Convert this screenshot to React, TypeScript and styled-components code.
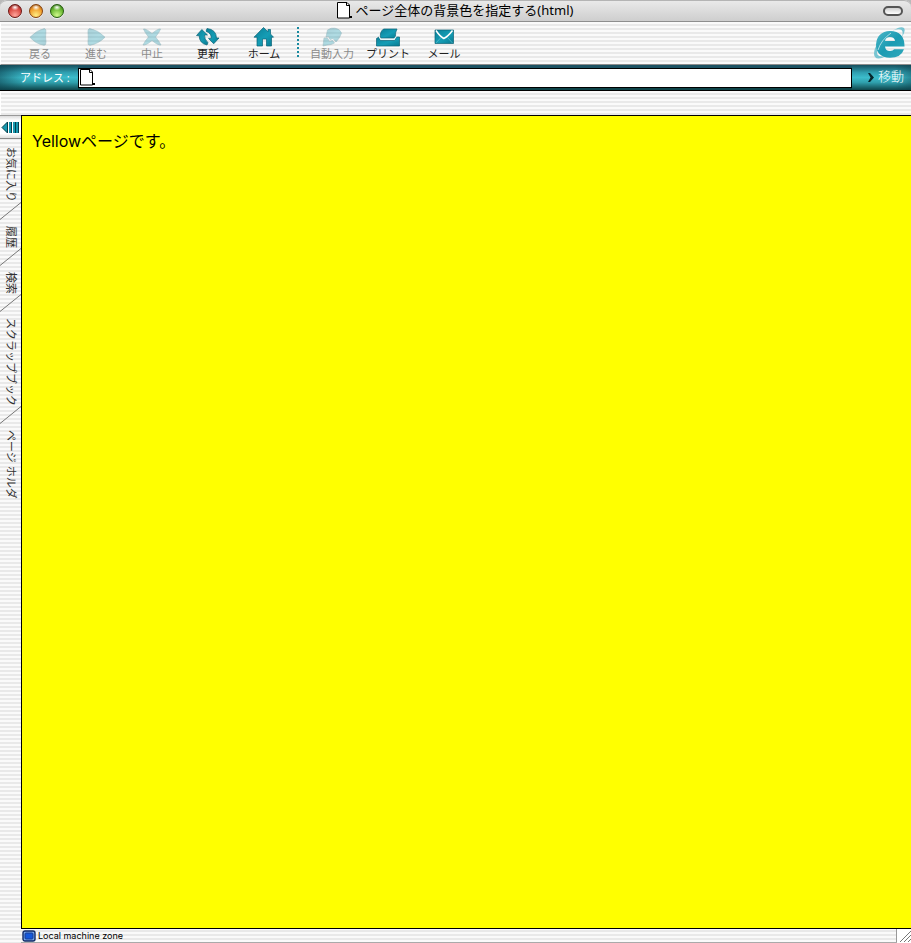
import React from "react";
import styled, { createGlobalStyle } from "styled-components";

const GlobalStyle = createGlobalStyle`
  * { box-sizing: border-box; }
  html, body { margin: 0; padding: 0; }
  body { font-family: "Noto Sans", "Noto Sans CJK JP", sans-serif; color: #000; }
  button { font: inherit; color: inherit; background: none; border: 0; padding: 0; margin: 0; }
`;

const stripes = `repeating-linear-gradient(to bottom, #fafafa 0, #fafafa 2px, #e9e9e9 2px, #e9e9e9 4px)`;

const Window = styled.div`
  display: flex;
  flex-direction: column;
  min-height: 100vh;
  background: ${stripes};
`;

const TitleBar = styled.header`
  display: grid;
  grid-template-columns: 1fr auto 1fr;
  align-items: center;
  height: 22px;
  padding: 0 8px;
  border-top: 1px solid #b4b4b4;
  border-bottom: 1px solid #8e8e8e;
  border-radius: 7px 7px 0 0;
  background: linear-gradient(#e9e9e9, #cecece);
  box-shadow: 0 -7px 0 7px #b9b9b9;
  clip-path: inset(0);
`;

const Lights = styled.div`
  display: flex;
  gap: 7px;
`;

const Light = styled.button<{ $dark: string; $base: string; $glow: string }>`
  width: 14px;
  height: 14px;
  border-radius: 50%;
  border: 1px solid ${(p) => p.$dark};
  background:
    radial-gradient(ellipse 4px 3px at 50% 20%, #ffffff, #ffffff00),
    radial-gradient(circle at 50% 85%, ${(p) => p.$glow}, ${(p) => p.$base} 60%, ${(p) => p.$dark});
  box-shadow: 0 1px 0 #ffffff99;
`;

const Title = styled.h1`
  display: flex;
  align-items: center;
  gap: 3px;
  margin: 0;
  padding: 0 2px 2px 0;
  font-size: 13px;
  line-height: 18px;
  font-weight: 400;
  white-space: nowrap;
`;

const Pill = styled.button`
  justify-self: end;
  width: 20px;
  height: 10px;
  border: 2px solid #555;
  border-radius: 5px;
  background: linear-gradient(#cfcfcf, #fff);
`;

const Toolbar = styled.nav`
  display: flex;
  align-items: flex-start;
  height: 43px;
  padding: 4px 5px 0 11px;
  border-left: 1px solid #fff;
  border-bottom: 1px solid #8c8c8c;
  background: ${stripes};
`;

const Tool = styled.button`
  display: flex;
  flex-direction: column;
  align-items: center;
  width: 56px;
  font-size: 11px;
  line-height: 13px;
  white-space: nowrap;
  color: #222;
  &:disabled { color: #8b8b8b; }
  &:disabled svg { opacity: 0.32; }
`;

const Divider = styled.div`
  width: 2px;
  height: 32px;
  margin: 1px 5px 0 5px;
  background: repeating-linear-gradient(to bottom, #1a8aa0 0, #1a8aa0 2px, transparent 2px, transparent 4px);
`;

const Brand = styled.div`
  margin-left: auto;
  height: 34px;
`;

const AddressBar = styled.form`
  display: flex;
  align-items: center;
  height: 26px;
  border-bottom: 1px solid #000;
  color: #fff;
  background:
    linear-gradient(to right, #0b3d4a88, transparent 24px, transparent calc(100% - 16px), #0b3d4a66),
    linear-gradient(#16505e, #2f9fb0 30%, #3cbccb 50%, #2f9fac 70%, #0e454a);
`;

const AddressLabel = styled.label`
  width: 78px;
  padding-left: 20px;
  font-size: 11px;
  line-height: 16px;
  white-space: nowrap;
`;

const AddressField = styled.div`
  display: flex;
  align-items: center;
  flex: 1;
  min-width: 0;
  height: 20px;
  border: 1px solid #000;
  background: #fff;
  box-shadow: 0 -3px 0 #1c5263, 0 2px 0 #0e4448;
`;

const AddressInput = styled.input`
  flex: 1;
  min-width: 0;
  height: 18px;
  border: 0;
  outline: 0;
  padding: 0 4px;
  background: transparent;
  font: inherit;
  font-size: 12px;
`;

const Go = styled.button`
  display: flex;
  align-items: center;
  gap: 4px;
  width: 59px;
  padding: 0 0 4px 16px;
  font-size: 13px;
  line-height: 18px;
  font-weight: 300;
  color: #fff;
  white-space: nowrap;
`;

const GoArrow = styled.svg`
  margin-top: 4px;
`;

const FavoritesBar = styled.div`
  height: 24px;
  border-left: 1px solid #fff;
  background: ${stripes};
`;

const Body = styled.div`
  display: flex;
  flex: 1;
`;

const Sidebar = styled.aside`
  width: 21px;
  border-top: 1px solid #999;
`;

const Collapse = styled.button`
  display: flex;
  align-items: center;
  width: 100%;
  height: 23px;
  padding-left: 1px;
  border-bottom: 1px solid #888;
  background: linear-gradient(#ddd, #fff 20%, #fff 80%, #ddd);
`;

const Tabs = styled.div`
  display: flex;
  flex-direction: column;
  align-items: flex-start;
  padding-top: 8px;
`;

const Tab = styled.button`
  writing-mode: vertical-rl;
  text-orientation: sideways;
  padding: 0 0 0 2px;
  font-size: 11px;
  line-height: 19px;
  text-align: left;
  white-space: nowrap;
  color: #333;
`;

const Slash = styled.svg`
  display: block;
  width: 21px;
  height: 18px;
  margin: 0 0 6px;
`;

const Content = styled.div`
  display: flex;
  flex: 1;
  flex-direction: column;
  min-width: 0;
`;

const Page = styled.main`
  flex: 1;
  padding: 13px 10px;
  border: solid #000;
  border-width: 1px 0 1px 1px;
  background: #ff0;
  font-family: Inter, "Noto Sans CJK JP", sans-serif;
  font-size: 16px;
  line-height: 24px;
`;

const Text = styled.p`
  margin: 0;
`;

const StatusBar = styled.footer`
  display: flex;
  height: 14px;
  border-bottom: 1px solid #aaa;
`;

const Status = styled.div`
  display: flex;
  flex: 1;
  align-items: center;
  gap: 2px;
  padding: 1px 0 0 1px;
  border-right: 1px solid #999;
  font-family: Inter, sans-serif;
  font-size: 9px;
  line-height: 12px;
`;

const Grip = styled.svg`
  width: 14px;
  height: 14px;
  background: #fff;
`;

const PageIcon = () => (
  <svg width="17" height="17" viewBox="0 0 17 17" aria-hidden="true">
    <path d="M1.5 .5H11L13.5 3V16H1.5Z" fill="#fff" stroke="#000" />
    <path d="M10.5 .5V3.5H13.5" fill="none" stroke="#000" />
    <path d="M13 15H14V14H16V16H13Z" fill="#000" />
  </svg>
);

const Icon = ({ children }: { children: React.ReactNode }) => (
  <svg width="26" height="21" viewBox="0 0 26 21" aria-hidden="true" fill="url(#teal)" stroke="#0a6377" strokeWidth=".7" strokeLinejoin="round">
    {children}
  </svg>
);

const BackIcon = () => <Icon><path d="M3 11.2Q10 4 17.5 2.5Q19.5 3 18.8 7Q18.3 11 19 16Q19 19.5 17 19.3Q8 17.5 3 11.2Z" /></Icon>;
const ForwardIcon = () => <Icon><path d="M22 11.2Q15 4 6.5 2.5Q4.5 3 5 7Q5.5 11 5 16Q4.5 19.5 7 19.3Q16 17.5 22 11.2Z" /></Icon>;
const StopIcon = () => <Icon><path d="M4.5 3Q7 2.5 13 7.5Q19 2.5 21.5 3Q20.5 6 16.5 11Q20.5 15.5 22 19Q19 19.5 13 14.5Q7 19.5 4 19Q5.5 15.5 9.5 11Q5.5 6 4.5 3Z" /></Icon>;
const RefreshIcon = () => (
  <Icon>
    <path d="M1.5 9.5L6.8 3.5L12.5 9H9.5Q9.2 13 13 16.8L12 19Q4.4 17.5 4.2 9.8Z" />
    <path d="M24 12L18.7 17.8L13.5 12.4H16.2Q16.8 7.5 11 5.2L12 2.5Q21.2 3.5 21.5 12Z" />
  </Icon>
);
const HomeIcon = () => <Icon><path d="M12.5 1.5L17 5.8V3.5H19.5V8L22.5 11.2H20.5V20H15.5V13H11.5V20H6V11.2H3Z" /></Icon>;
const FillIcon = () => (
  <Icon>
    <path d="M7 11L8.5 4Q12 1.5 16 2.2Q21 3 22.5 7Q21 12 17 16L14 12.5L11 13.5L9.5 10.5Z" />
    <path d="M4 20L5 12L8.5 12L10.5 15.5L13.5 14.5L15.5 17Q12 19 8 19Z" />
  </Icon>
);
const PrintIcon = () => (
  <Icon>
    <path d="M8.5 3H22Q20 6 20.5 12H5.5Q4.5 6 8.5 3Z" />
    <path d="M1.5 12.5L4 11L5.5 14.5H19.5L21.5 11H24.5V20H1.5Z" />
    <path d="M4.2 11L6 13.5H19L21.2 10.5" fill="none" stroke="#e4f8fa" strokeWidth="1.2" />
  </Icon>
);
const MailIcon = () => (
  <Icon>
    <path d="M4 4H22.5V17.5H4Z" />
    <path d="M5 4.5Q9 10.5 12.8 12.5Q17 10.5 21.5 4.5" fill="none" stroke="#fff" strokeWidth="1.5" />
    <path d="M5 17L10 11.5M21.5 17L16.5 11.5" fill="none" stroke="#6fc4d0" strokeWidth=".6" />
  </Icon>
);

const ExplorerLogo = () => (
  <svg width="34" height="34" viewBox="0 0 34 34" role="img" aria-label="Internet Explorer">
    <path d="M21 4.5Q29 -.5 32 2Q34 5 30 11Q31.5 5.5 29.5 4Q27 2.5 21 4.5ZM6 16Q0 27 3 31Q6 34.5 14 30Q7 31.5 5.5 28.5Q3.5 25 9 16Q15 8 22 4.5Q12 8 6 16Z" fill="#79c5d2" />
    <path d="M32.5 20.5H13Q13.5 25 18 25Q21 25 22.2 23.2H32Q29 31.8 18 31.8Q4 31 4 18.5Q5 5.5 18 5Q32.5 5 32.5 20.5ZM13 15H23Q22.5 11 18 11Q13.7 11 13 15Z" fill="url(#logo)" fillRule="evenodd" />
    <path d="M6 24Q9 14 19 7" fill="none" stroke="#a9dce4" strokeWidth="1" />
  </svg>
);

const sideTabs = ["お気に入り", "履歴", "検索", "スクラップブック", "ページ ホルダ"];

export default function App() {
  return (
    <Window>
      <GlobalStyle />
      <svg width="0" height="0" display="block" aria-hidden="true">
        <defs>
          <linearGradient id="teal" x1="0" y1="0" x2="1" y2="1">
            <stop offset="0" stopColor="#0b8098" />
            <stop offset=".55" stopColor="#159db5" />
            <stop offset="1" stopColor="#087a91" />
          </linearGradient>
          <linearGradient id="logo" x1="0" y1="0" x2="1" y2="1">
            <stop offset="0" stopColor="#4db7c8" />
            <stop offset=".5" stopColor="#1b9bb2" />
            <stop offset="1" stopColor="#30a9bc" />
          </linearGradient>
        </defs>
      </svg>
      <TitleBar>
        <Lights>
          <Light aria-label="閉じる" $dark="#6b1512" $base="#d8473f" $glow="#ffa59b" />
          <Light aria-label="しまう" $dark="#85410c" $base="#f09a28" $glow="#ffee83" />
          <Light aria-label="拡大" $dark="#245c0d" $base="#65b52e" $glow="#cff98c" />
        </Lights>
        <Title><PageIcon />ページ全体の背景色を指定する(html)</Title>
        <Pill aria-label="ツールバー" />
      </TitleBar>
      <Toolbar>
        <Tool disabled><BackIcon />戻る</Tool>
        <Tool disabled><ForwardIcon />進む</Tool>
        <Tool disabled><StopIcon />中止</Tool>
        <Tool><RefreshIcon />更新</Tool>
        <Tool><HomeIcon />ホーム</Tool>
        <Divider />
        <Tool disabled><FillIcon />自動入力</Tool>
        <Tool><PrintIcon />プリント</Tool>
        <Tool><MailIcon />メール</Tool>
        <Brand><ExplorerLogo /></Brand>
      </Toolbar>
      <AddressBar onSubmit={(e) => e.preventDefault()}>
        <AddressLabel htmlFor="address">アドレス :</AddressLabel>
        <AddressField>
          <PageIcon />
          <AddressInput id="address" type="text" />
        </AddressField>
        <Go type="submit">
          <GoArrow width="6" height="9" viewBox="0 0 6 9" aria-hidden="true"><path d="M0 0H2L6 4.5L2 9H0L2.5 4.5Z" fill="#06262c" /></GoArrow>
          移動
        </Go>
      </AddressBar>
      <FavoritesBar />
      <Body>
        <Sidebar>
          <Collapse aria-label="サイドバー">
            <svg width="18" height="13" viewBox="0 0 18 13" aria-hidden="true">
              <path d="M1 6.5L6.5 1V12Z" fill="#1799af" stroke="#063e4c" />
              <path d="M8 1H10V12H8ZM12 1H14V12H12ZM15 1H17V12H15Z" fill="#1799af" />
              <path d="M10 1H11V12H10ZM14 1H15V12H14ZM17 1H18V12H17Z" fill="#063e4c" />
            </svg>
          </Collapse>
          <Tabs>
            {sideTabs.map((name, i) => (
              <React.Fragment key={name}>
                {i > 0 && <Slash viewBox="0 0 21 18" aria-hidden="true"><path d="M0 17.5L21 .5" stroke="#777" /></Slash>}
                <Tab>{name}</Tab>
              </React.Fragment>
            ))}
          </Tabs>
        </Sidebar>
        <Content>
          <Page><Text>Yellowページです。</Text></Page>
          <StatusBar>
            <Status>
              <svg width="14" height="12" viewBox="0 0 14 12" aria-hidden="true">
                <rect x="1" y="1" width="12" height="10" rx="2" fill="#77aaf0" stroke="#122a66" strokeWidth="1.4" />
                <rect x="3" y="3" width="8" height="6" rx="1" fill="#1458dc" stroke="#1a3c92" />
              </svg>
              Local machine zone
            </Status>
            <Grip viewBox="0 0 14 14" aria-hidden="true"><path d="M3 13L14 2M7 13L14 6M11 13L14 10" stroke="#777" /></Grip>
          </StatusBar>
        </Content>
      </Body>
    </Window>
  );
}
